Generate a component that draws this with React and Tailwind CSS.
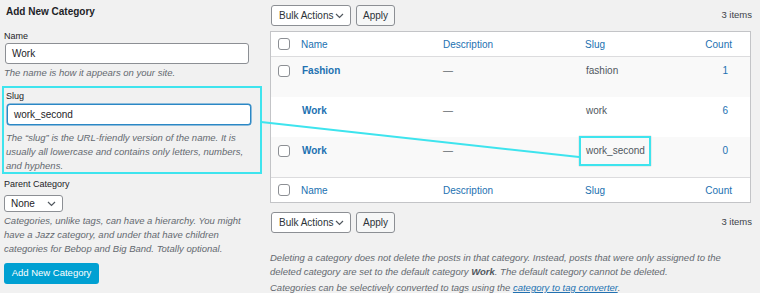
import React from 'react'

const rows = [
  { name: 'Fashion', slug: 'fashion', count: 1, check: true, bg: 'bg-[#f9f9f9]' },
  { name: 'Work', slug: 'work', count: 6, check: false, bg: 'bg-white' },
  { name: 'Work', slug: 'work_second', count: 0, check: true, bg: 'bg-[#f9f9f9]', marked: true },
]

function Chevron() {
  return (
    <svg width="9" height="6" viewBox="0 0 9 6" className="shrink-0">
      <polyline points="1,1 4.5,4.5 8,1" fill="none" stroke="#50575e" strokeWidth="1.2" />
    </svg>
  )
}

function Checkbox() {
  return <span className="block w-[12px] h-[12px] rounded-[3px] border border-[#8c8f94] bg-white" />
}

function TableNav() {
  return (
    <div className="flex items-center h-[21px]">
      <div className="ml-[1px] w-[80px] h-[21px] flex items-center justify-between pl-[7px] pr-[6px] bg-white border border-[#8c8f94] rounded-[3px] text-[10px] text-[#2c3338]">
        <span>Bulk Actions</span>
        <Chevron />
      </div>
      <div className="ml-[5px] w-[39px] h-[21px] flex items-center justify-center bg-[#f6f7f7] border border-[#8c8f94] rounded-[3px] text-[10px] text-[#2c3338]">
        Apply
      </div>
      <span className="ml-auto text-[9.5px] text-[#3c434a]">3 items</span>
    </div>
  )
}

function HeadRow({ top }) {
  return (
    <div className={`flex items-center h-[25px] bg-white text-[10px] text-[#2271b1] ${top ? 'border-b' : 'border-t'} border-[#dcdcde]`}>
      <div className="w-[30px] pl-[7px] shrink-0"><Checkbox /></div>
      <div className="w-[142px] shrink-0">Name</div>
      <div className="w-[142px] shrink-0">Description</div>
      <div className="w-[105px] shrink-0">Slug</div>
      <div className="flex-1 text-right pr-[18px]">Count</div>
    </div>
  )
}

export default function App() {
  return (
    <div className="relative w-[760px] h-[293px] overflow-hidden bg-[#f1f1f1] flex font-['Liberation_Sans',Arial,sans-serif] text-[#1d2327]">
      {/* left form */}
      <div className="w-[270px] shrink-0 pl-[4px] pt-[5px]">
        <h2 className="text-[10px] leading-[14px] font-bold pl-[2px]">Add New Category</h2>

        <div className="mt-[11px] text-[9px] leading-[12px]">Name</div>
        <div className="mt-[1px] ml-[1px] w-[244px] h-[21px] bg-white border border-[#8c8f94] rounded-[3px] flex items-center pl-[6px] text-[10px]">Work</div>
        <p className="mt-[2px] text-[9.5px] leading-[14px] italic text-[#646970]">The name is how it appears on your site.</p>

        <div className="mt-[6px] -ml-[2px] w-[260px] border-2 border-[#3ee4ee] pl-[2px] pt-[2px]">
          <div className="text-[9px] leading-[12px]">Slug</div>
          <div className="mt-[2px] ml-[1px] w-[244px] h-[21px] bg-white border border-[#2a87c5] rounded-[3px] shadow-[0_0_0_0.5px_#2a87c5] flex items-center pl-[6px] text-[10px]">work_second</div>
          <p className="mt-[6px] -mb-[1px] text-[9.5px] leading-[14px] italic text-[#646970]">
            The “slug” is the URL-friendly version of the name. It is<br />
            usually all lowercase and contains only letters, numbers,<br />
            and hyphens.
          </p>
        </div>

        <div className="mt-[4px] text-[9px] leading-[12px]">Parent Category</div>
        <div className="mt-[5px] w-[59px] h-[17px] bg-white border border-[#8c8f94] rounded-[3px] flex items-center justify-between pl-[6px] pr-[6px] text-[10px]">
          <span>None</span>
          <Chevron />
        </div>
        <p className="mt-[2px] text-[9.5px] leading-[14px] italic text-[#646970]">
          Categories, unlike tags, can have a hierarchy. You might<br />
          have a Jazz category, and under that have children<br />
          categories for Bebop and Big Band. Totally optional.
        </p>
        <div className="mt-[7px] w-[95px] h-[21px] bg-[#00a0d2] rounded-[3px] flex items-center justify-center text-[9.5px] text-white">
          Add New Category
        </div>
      </div>

      {/* right list */}
      <div className="w-[482px] shrink-0 pt-[5px]">
        <TableNav />

        <div className="mt-[5px] w-[481px] border border-[#c3c4c7]">
          <HeadRow top />
          {rows.map((r, i) => (
            <div key={i} className={`flex h-[40px] pt-[7px] text-[10px] leading-[14px] ${r.bg}`}>
              <div className="w-[30px] pl-[7px] pt-[1px] shrink-0">{r.check && <Checkbox />}</div>
              <div className="w-[142px] shrink-0 pl-[1px] font-bold text-[#2271b1]">{r.name}</div>
              <div className="w-[142px] shrink-0 text-[#646970]">—</div>
              <div className="w-[105px] shrink-0 pl-[1px] text-[#50575e]">
                <span className="relative">
                  {r.slug}
                  {r.marked && (
                    <span className="absolute left-[-7px] top-[-9px] w-[72px] h-[30px] border-2 border-[#3ee4ee] shadow-[0_0_1px_#9aa]" />
                  )}
                </span>
              </div>
              <div className="flex-1 text-right pr-[22px] text-[#2271b1]">{r.count}</div>
            </div>
          ))}
          <HeadRow />
        </div>

        <div className="mt-[9px]">
          <TableNav />
        </div>

        <p className="mt-[18px] text-[9.5px] leading-[14px] italic text-[#646970] whitespace-nowrap">
          Deleting a category does not delete the posts in that category. Instead, posts that were only assigned to the<br />
          deleted category are set to the default category <strong className="font-bold text-[#50575e]">Work</strong>. The default category cannot be deleted.
        </p>
        <p className="mt-[2px] text-[9.5px] leading-[14px] italic text-[#646970] whitespace-nowrap">
          Categories can be selectively converted to tags using the <span className="underline text-[#2271b1]">category to tag converter</span>.
        </p>
      </div>

      {/* annotation line */}
      <svg className="absolute inset-0 pointer-events-none" width="760" height="293">
        <line x1="261" y1="122" x2="579" y2="157" stroke="#3ee4ee" strokeWidth="2" />
      </svg>
    </div>
  )
}
